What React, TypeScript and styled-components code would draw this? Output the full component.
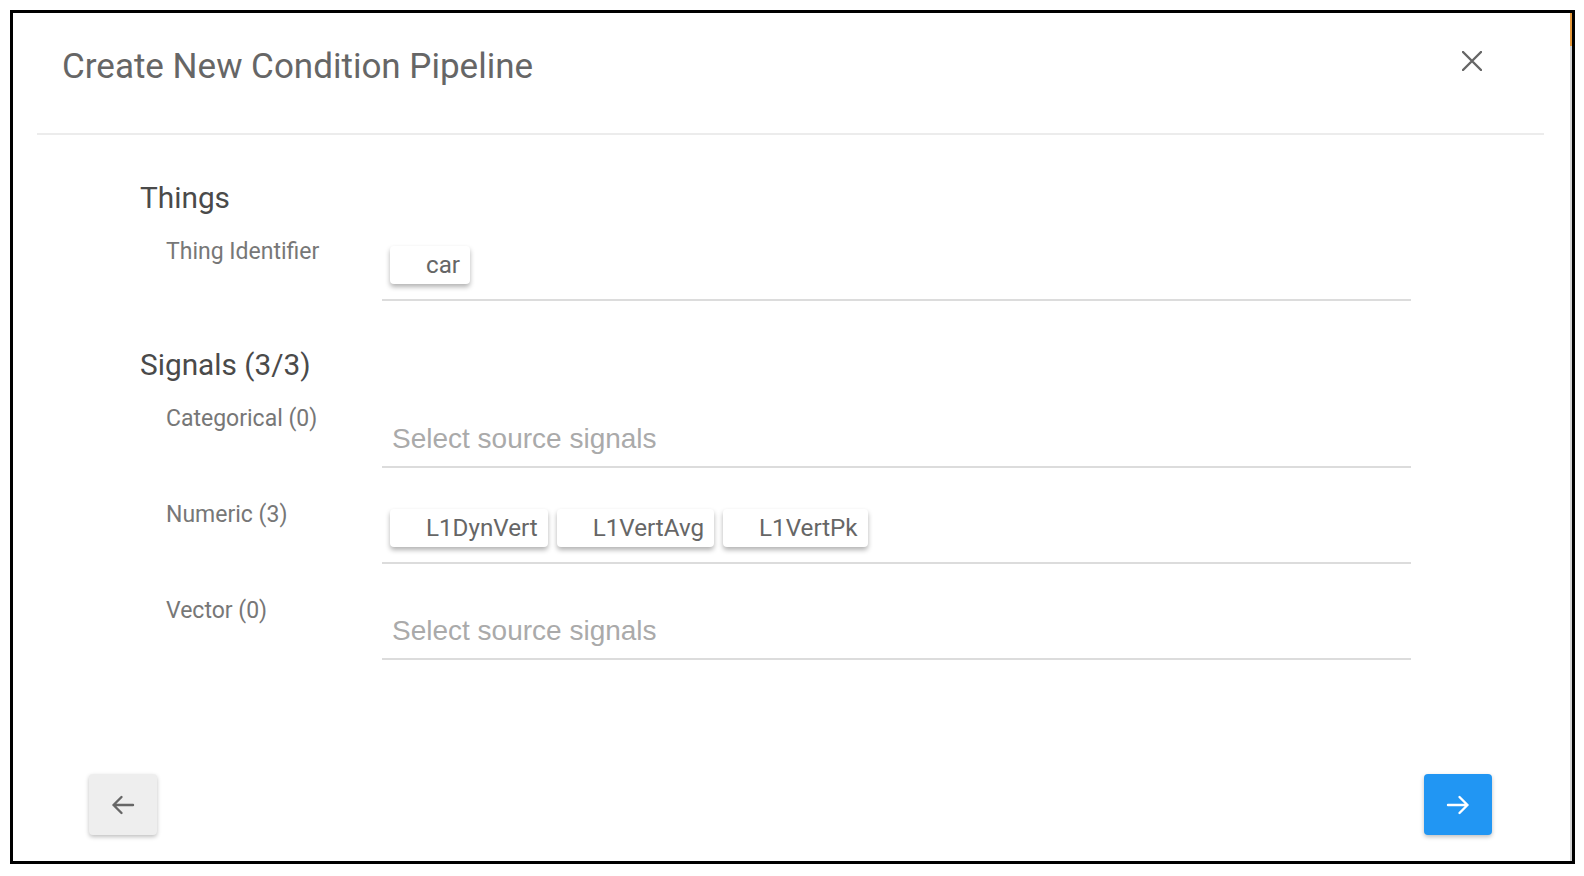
import React from "react";
import styled, { createGlobalStyle } from "styled-components";

const GlobalStyle = createGlobalStyle`
  html, body {
    margin: 0;
    padding: 0;
    background: #fff;
  }
  body {
    font-family: Roboto, "Liberation Sans", Arial, sans-serif;
  }
`;

const Frame = styled.div`
  position: relative;
  box-sizing: border-box;
  width: 1565px;
  height: 854px;
  margin: 10px 0 0 10px;
  border: 3px solid #000;
  background: #fff;
  display: flex;
  flex-direction: column;
  box-shadow: inset -2px 0 0 #d4d4d4, 0 2px 0 #bdbdbd;

  /* scrollbar thumb peeking at the top right */
  &::after {
    content: "";
    position: absolute;
    top: 0;
    right: 0;
    width: 2px;
    height: 33px;
    background: #e69a3c;
  }
`;

const Header = styled.header`
  display: flex;
  justify-content: space-between;
  align-items: flex-start;
  padding: 34px 80px 46px 49px;
`;

const Title = styled.h1`
  margin: 0;
  font-size: 35px;
  line-height: 40px;
  font-weight: 400;
  color: #666;
`;

const CloseButton = styled.button`
  width: 40px;
  height: 40px;
  margin-top: -6px;
  border: none;
  background: transparent;
  padding: 0;
  display: flex;
  align-items: center;
  justify-content: center;
  cursor: pointer;
`;

const Divider = styled.hr`
  margin: 0 28px 0 24px;
  border: none;
  height: 2px;
  background: #ececec;
`;

const Body = styled.div`
  flex: 1;
  padding: 45px 0 0 127px;
`;

const Section = styled.section`
  & + & {
    margin-top: 46px;
  }
`;

const SectionTitle = styled.h2`
  margin: 0 0 22px;
  font-size: 29.8px;
  line-height: 36px;
  font-weight: 400;
  color: #4a4a4a;
`;

const Rows = styled.div`
  display: flex;
  flex-direction: column;
  gap: 33px;
`;

const Row = styled.div`
  display: grid;
  grid-template-columns: 242px 1029px;
`;

const Label = styled.div`
  padding-left: 26px;
  font-size: 23px;
  line-height: 28px;
  color: #777;
`;

const Field = styled.div<{ $empty?: boolean }>`
  display: flex;
  align-items: center;
  gap: 9px;
  border-bottom: 2px solid #dcdcdc;
  padding: ${(p) => (p.$empty ? "15px 0 8px 10px" : "8px 0 15px 8px")};
`;

const Chip = styled.span`
  height: 38px;
  box-sizing: border-box;
  padding: 0 10px 0 36px;
  display: inline-flex;
  align-items: center;
  background: #fff;
  border-radius: 4px;
  box-shadow: 0 3px 5px rgba(0, 0, 0, 0.3);
  font-size: 24.2px;
  color: #666;
`;

const Placeholder = styled.span`
  font-family: "Liberation Sans", Arial, sans-serif;
  font-size: 28px;
  line-height: 38px;
  color: #aaa;
`;

const Footer = styled.footer`
  display: flex;
  justify-content: space-between;
  padding: 0 80px 26px 76px;
`;

const NavButton = styled.button<{ $primary?: boolean }>`
  width: 68px;
  height: 61px;
  border: none;
  border-radius: 4px;
  padding: 0;
  display: flex;
  align-items: center;
  justify-content: center;
  background: ${(p) => (p.$primary ? "#2196f3" : "#eeeeee")};
  box-shadow: 0 2px 4px rgba(0, 0, 0, 0.25);
  cursor: pointer;
`;

const CloseIcon = () => (
  <svg width="20" height="20" viewBox="0 0 20 20">
    <path d="M1 1L19 19M19 1L1 19" stroke="#666" strokeWidth="2.4" strokeLinecap="round" fill="none" />
  </svg>
);

const Arrow = ({ dir, color }: { dir: "left" | "right"; color: string }) => (
  <svg
    width="24"
    height="20"
    viewBox="0 0 24 20"
    style={{ transform: dir === "right" ? "scaleX(-1)" : undefined }}
  >
    <path
      d="M22 10H2.5M10.5 2L2.5 10l8 8"
      stroke={color}
      strokeWidth="2.4"
      strokeLinecap="round"
      strokeLinejoin="round"
      fill="none"
    />
  </svg>
);

type SignalRow = { label: string; values: string[] };

const signals: SignalRow[] = [
  { label: "Categorical (0)", values: [] },
  { label: "Numeric (3)", values: ["L1DynVert", "L1VertAvg", "L1VertPk"] },
  { label: "Vector (0)", values: [] },
];

const FieldRow = ({ label, values }: SignalRow) => (
  <Row>
    <Label>{label}</Label>
    <Field $empty={values.length === 0}>
      {values.length === 0 ? (
        <Placeholder>Select source signals</Placeholder>
      ) : (
        values.map((v) => <Chip key={v}>{v}</Chip>)
      )}
    </Field>
  </Row>
);

export default function App() {
  return (
    <>
      <GlobalStyle />
      <Frame>
        <Header>
          <Title>Create New Condition Pipeline</Title>
          <CloseButton aria-label="Close">
            <CloseIcon />
          </CloseButton>
        </Header>
        <Divider />
        <Body>
          <Section>
            <SectionTitle>Things</SectionTitle>
            <Rows>
              <FieldRow label="Thing Identifier" values={["car"]} />
            </Rows>
          </Section>
          <Section>
            <SectionTitle>Signals (3/3)</SectionTitle>
            <Rows>
              {signals.map((s) => (
                <FieldRow key={s.label} {...s} />
              ))}
            </Rows>
          </Section>
        </Body>
        <Footer>
          <NavButton aria-label="Back">
            <Arrow dir="left" color="#666" />
          </NavButton>
          <NavButton $primary aria-label="Next">
            <Arrow dir="right" color="#fff" />
          </NavButton>
        </Footer>
      </Frame>
    </>
  );
}
